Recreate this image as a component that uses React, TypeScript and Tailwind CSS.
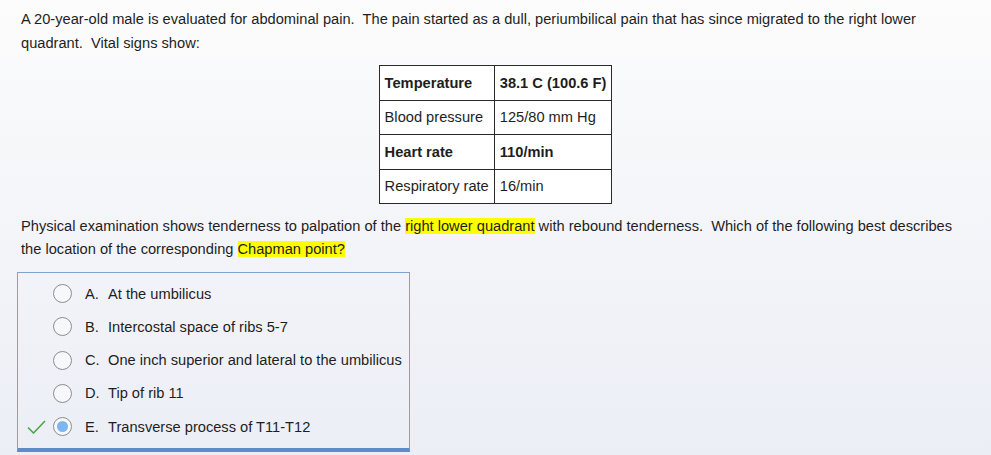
import { Fragment } from 'react';

const vitals = [
  { label: 'Temperature', value: '38.1 C (100.6 F)', bold: true },
  { label: 'Blood pressure', value: '125/80 mm Hg', bold: false },
  { label: 'Heart rate', value: '110/min', bold: true },
  { label: 'Respiratory rate', value: '16/min', bold: false },
];

const choices = [
  { key: 'A', text: 'At the umbilicus' },
  { key: 'B', text: 'Intercostal space of ribs 5-7' },
  { key: 'C', text: 'One inch superior and lateral to the umbilicus' },
  { key: 'D', text: 'Tip of rib 11' },
  { key: 'E', text: 'Transverse process of T11-T12', correct: true },
];

function Radio({ selected }: { selected?: boolean }) {
  return (
    <span className="flex h-[19px] w-[19px] items-center justify-center rounded-full border border-[#8c8c8c] bg-[#f7f8fb]">
      {selected && <span className="h-[11px] w-[11px] rounded-full bg-[#7db6ef]" />}
    </span>
  );
}

export default function App() {
  return (
    <div className="min-h-screen bg-linear-to-b from-[#fcfcfc] to-[#eceef6] pl-[21px] pr-[21px] pt-[7px] font-['Liberation_Sans',Arial,sans-serif] text-[14.65px] leading-[24px] text-[#1e1e1e]">
      <p>
        A 20-year-old male is evaluated for abdominal pain.&nbsp; The pain started as a dull, periumbilical pain that has since
        migrated to the right lower quadrant.&nbsp; Vital signs show:
      </p>

      <div className="mt-[10px] flex justify-center">
        <table className="border-collapse bg-white">
          <tbody>
            {vitals.map((v) => (
              <tr key={v.label} className={`h-[34.5px] ${v.bold ? 'font-bold' : ''}`}>
                <td className="border border-[#2a2a2a] px-[5px]">{v.label}</td>
                <td className="border border-[#2a2a2a] px-[5px]">{v.value}</td>
              </tr>
            ))}
          </tbody>
        </table>
      </div>

      <p className="mt-[11px] leading-[23px]">
        Physical examination shows tenderness to palpation of the <span className="bg-[#ffff00]">right lower quadrant</span> with
        rebound tenderness.&nbsp; Which of the following best describes the location of the corresponding{' '}
        <span className="bg-[#ffff00]">Chapman point?</span>
      </p>

      <div className="-ml-[4px] mt-[11px] w-[393px] border border-b-4 border-[#7fa3d1] border-b-[#5d8cc9] pb-[5px] pt-[4px]">
        {choices.map((c) => (
          <Fragment key={c.key}>
            <div className="flex h-[33.25px] items-center pl-[9px]">
              <span className="flex w-[26px] items-center">
                {c.correct && (
                  <svg width="19" height="14" viewBox="0 0 19 14" fill="none">
                    <path d="M1 7.5 L6.5 13 L18 1" stroke="#4aa64a" strokeWidth="1.6" />
                  </svg>
                )}
              </span>
              <Radio selected={c.correct} />
              <span className="ml-[13px] w-[23px]">{c.key}.</span>
              <span>{c.text}</span>
            </div>
          </Fragment>
        ))}
      </div>
    </div>
  );
}
